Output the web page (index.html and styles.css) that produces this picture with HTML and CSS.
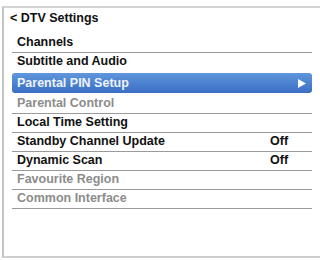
FILE: index.html
```html
<!DOCTYPE html>
<html lang="en">
<head>
    <meta charset="UTF-8">
    <title>DTV Settings</title>
    <link rel="stylesheet" href="styles.css">
</head>
<body>

<div class="panel">
    <div class="title">&lt; DTV Settings</div>

    <ul class="menu">
        <li class="item">Channels</li>
        <li class="item no-line">Subtitle and Audio</li>
        <li class="item selected">
            <span>Parental PIN Setup</span>
            <svg class="arrow" width="8" height="9" viewBox="0 0 8 9"><polygon points="0,0 8,4.5 0,9" fill="#fff"/></svg>
        </li>
        <li class="item disabled">Parental Control</li>
        <li class="item">Local Time Setting</li>
        <li class="item"><span>Standby Channel Update</span><span class="value">Off</span></li>
        <li class="item"><span>Dynamic Scan</span><span class="value">Off</span></li>
        <li class="item disabled">Favourite Region</li>
        <li class="item disabled">Common Interface</li>
    </ul>
</div>

</body>
</html>
```

FILE: styles.css
```css
body {
    margin: 0;
    background-color: #fff;
    font-family: "Liberation Sans", Arial, sans-serif;
    font-size: 12.5px;
    font-weight: bold;
    color: #111;
}
.panel {
    margin: 6px 0 0 2px;
    height: 248px;
    border-top: 2px solid #d2d2d2;
    border-left: 2px solid #c4c4c4;
    border-bottom: 2px solid #cfcfcf;
}
.title {
    padding: 2px 0 8px 6px;
    line-height: 16px;
}
.menu {
    list-style: none;
    margin: 0 0 0 8px;
    padding: 0;
    width: 300px;
}
.item {
    display: flex;
    align-items: flex-start;
    justify-content: space-between;
    height: 16px;
    line-height: 16px;
    padding: 0 0 2px 5px;
    border-bottom: 1px solid #9a9a9a;
}
.item.no-line {
    border-bottom-color: transparent;
}
.item.disabled {
    color: #8c8c8c;
}
.value {
    width: 42px;
}
.selected {
    height: 20px;
    line-height: 20px;
    padding: 0 6px 0 5px;
    margin: 1px 0 2px;
    align-items: center;
    border: none;
    border-radius: 3px;
    background: linear-gradient(#6096dc, #3a6fc4);
    color: #eef3fb;
}
.arrow {
    display: block;
}
```
